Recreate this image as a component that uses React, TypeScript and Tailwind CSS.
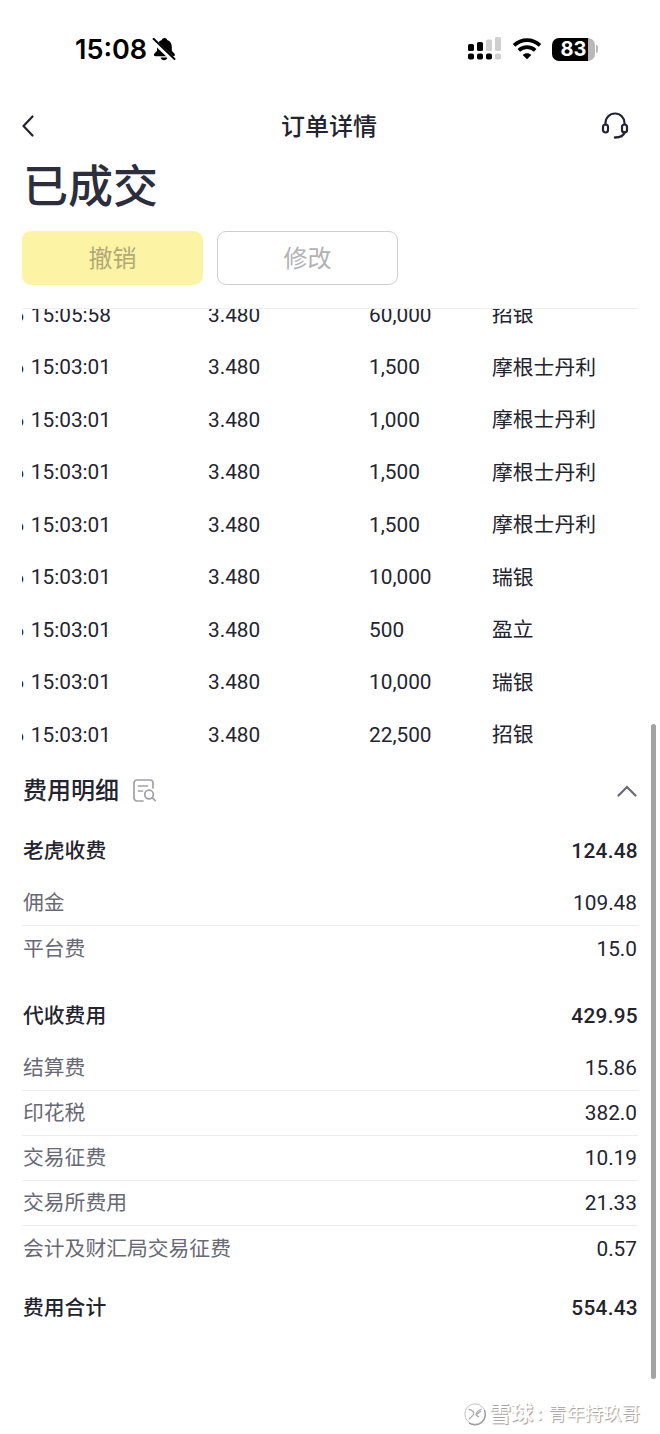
const trades = [
  { time: '06/26 15:05:58', price: '3.480', amount: '60,000', broker: '招银' },
  { time: '06/26 15:03:01', price: '3.480', amount: '1,500', broker: '摩根士丹利' },
  { time: '06/26 15:03:01', price: '3.480', amount: '1,000', broker: '摩根士丹利' },
  { time: '06/26 15:03:01', price: '3.480', amount: '1,500', broker: '摩根士丹利' },
  { time: '06/26 15:03:01', price: '3.480', amount: '1,500', broker: '摩根士丹利' },
  { time: '06/26 15:03:01', price: '3.480', amount: '10,000', broker: '瑞银' },
  { time: '06/26 15:03:01', price: '3.480', amount: '500', broker: '盈立' },
  { time: '06/26 15:03:01', price: '3.480', amount: '10,000', broker: '瑞银' },
  { time: '06/26 15:03:01', price: '3.480', amount: '22,500', broker: '招银' }
];

const feeGroups = [
  {
    name: '老虎收费',
    total: '124.48',
    items: [
      { name: '佣金', value: '109.48' },
      { name: '平台费', value: '15.0' }
    ]
  },
  {
    name: '代收费用',
    total: '429.95',
    items: [
      { name: '结算费', value: '15.86' },
      { name: '印花税', value: '382.0' },
      { name: '交易征费', value: '10.19' },
      { name: '交易所费用', value: '21.33' },
      { name: '会计及财汇局交易征费', value: '0.57' }
    ]
  }
];

function StatusBar() {
  return (
    <div className="flex h-24 items-center justify-between pt-[2px] pl-[75px] pr-[61px]">
      <div className="flex items-center gap-[5px] font-['Inter'] text-[27px] font-semibold text-black">
        <span className="w-[72px] whitespace-nowrap pt-[2px]">15:08</span>
        <svg width="24" height="24" viewBox="0 0 24 24">
          <path
            d="M12.500 1C11 1 10 1.900 9.800 3 6.800 4 5 6.500 5 10v3.500c0 1.200-3.200 2.800-3.200 4.300 0 .900.600 1.400 1.600 1.400h18c1 0 1.600-.500 1.600-1.400 0-1.500-3.200-3.100-3.200-4.300V10c0-3.500-1.600-6-4.600-7-.200-1.100-1.200-2-2.700-2z"
            fill="#000"
          />
          <path d="M8.600 20.500h6.800c-.500 1.800-1.800 2.700-3.400 2.700s-2.900-.900-3.400-2.700z" fill="#000" />
          <path d="M0 2.500L22 23.500" stroke="#fff" strokeWidth="4.800" />
          <path d="M1.500 1.800L22.500 22" stroke="#000" strokeWidth="1.900" strokeLinecap="round" />
        </svg>
      </div>
      <div className="flex items-center">
        <svg width="34" height="24" viewBox="0 0 34 24">
          <g fill="#000">
            <rect x="0" y="7" width="6" height="7" rx="1.600" />
            <rect x="9" y="5" width="6" height="9" rx="1.600" />
            <rect x="0" y="16.500" width="6" height="6" rx="1.800" />
            <rect x="9" y="16.500" width="6" height="6" rx="1.800" />
            <rect x="18" y="16.500" width="6" height="6" rx="1.800" />
          </g>
          <g fill="#cfcfcf">
            <rect x="18" y="2.500" width="6" height="11.500" rx="1.600" />
            <rect x="27" y="0" width="6" height="14" rx="1.600" />
            <rect x="27" y="16.500" width="6" height="6" rx="1.800" />
          </g>
        </svg>
        <svg className="ml-[10px]" width="30" height="22" viewBox="0 0 30 22">
          <g fill="none" stroke="#000" strokeWidth="3.600">
            <path d="M2 7.400C9.500 0.300 20.500 0.300 28 7.400" />
            <path d="M6.800 12.300C11.500 8 18.500 8 23.200 12.300" />
          </g>
          <path d="M15 21.300l-4.300-4.400c2.500-2.200 6.100-2.200 8.600 0z" fill="#000" />
        </svg>
        <div className="ml-[10px] flex h-[23px] w-[43px] items-center justify-center rounded-[7px] bg-[linear-gradient(to_right,#000_83%,#b8b8b8_83%)] font-['Inter'] text-[20px] font-bold text-white">
          83
        </div>
        <div className="mr-[1px] ml-[1px] h-2 w-[2px] rounded-r-full bg-[#b8b8b8]" />
      </div>
    </div>
  );
}

function Header() {
  return (
    <div className="flex h-[60px] items-center justify-between pr-[31px] pl-[22px]">
      <svg width="35" height="22" viewBox="0 0 35 22" fill="none">
        <path d="M10.500 1.500L1.500 11l9 9.500" stroke="#23242f" strokeWidth="2.200" strokeLinecap="round" strokeLinejoin="round" />
      </svg>
      <h1 className="pt-[2px] text-[24px] font-medium">订单详情</h1>
      <svg width="28" height="28" viewBox="0 0 28 28" fill="none" stroke="#23242f" strokeWidth="2.200" strokeLinecap="round">
        <path d="M4.500 12.500V11a9.500 9.500 0 0 1 19 0v1.500" />
        <rect x="2" y="12.500" width="5" height="8" rx="2.500" />
        <rect x="21" y="12.500" width="5" height="8" rx="2.500" />
        <path d="M23.500 20.500c-1 3.500-4 5-9.500 5" strokeWidth="2.500" />
      </svg>
    </div>
  );
}

function Watermark() {
  return (
    <div className="flex items-center whitespace-nowrap text-white [text-shadow:1px_1px_1px_#9a9a9a]">
      <svg width="24" height="24" viewBox="0 0 24 24" fill="none">
        <circle cx="12" cy="12" r="10.200" stroke="#c4c4c4" />
        <path d="M21.500 8A10.500 10.500 0 0 1 6 21" stroke="#999" strokeWidth="1.300" />
        <path d="M5.500 7.500c3 0 6 2.500 5 5-.800 2-3 2.500-4.500 5M18.500 7c-3 1.500-5.500 3.500-5.500 5.500 0 1.500 2 1.500 3 2.500M13.500 12.500l4.500-3.500" stroke="#aaa" strokeWidth="1.300" />
      </svg>
      <span className="ml-[2px] text-[22px] font-bold">雪球</span>
      <span className="w-[15px] pl-1 text-[18px] font-bold">:</span>
      <span className="text-[18.400px]">青年持玖哥</span>
    </div>
  );
}

function App() {
  return (
    <div className="relative flex h-[1434px] w-[660px] flex-col overflow-hidden bg-white font-['Roboto','Noto_Sans_CJK_SC',sans-serif] text-[20.8px] text-[#23242f]">
      <StatusBar />
      <Header />

      <div className="px-[22px]">
        <h2 className="h-[75px] pt-[3px] pl-[1px] text-[45px] leading-[58px] font-medium text-[#2c2e3d]">已成交</h2>
        <div className="flex gap-[14px]">
          <button className="h-[54px] w-[181px] rounded-[9px] bg-[#fdf3a5] pt-[2px] text-[24px] text-[#b1a978]">撤销</button>
          <button className="h-[54px] w-[181px] rounded-[9px] border border-[#cfcfd2] pt-[2px] text-[24px] text-[#b2b2b5]">修改</button>
        </div>

        <div className="mt-[23px] flex h-[453px] flex-col justify-end overflow-hidden border-t border-[#ededed]">
          {trades.map((trade, i) => (
            <div key={i} className="grid h-[52.5px] shrink-0 grid-cols-[186px_161px_123px_1fr] items-center pt-[1px]">
              <div className="flex w-[89px] justify-end overflow-hidden whitespace-nowrap [word-spacing:1.5px]">{trade.time}</div>
              <div>{trade.price}</div>
              <div>{trade.amount}</div>
              <div className="pt-[1px]">{trade.broker}</div>
            </div>
          ))}
        </div>

        <div className="flex h-[60px] items-center justify-between pr-[1px]">
          <div className="flex items-center gap-[14px]">
            <h3 className="pl-[1px] text-[24px] font-medium">费用明细</h3>
            <svg className="-ml-[1px]" width="25" height="24" viewBox="0 0 25 24" fill="none" stroke="#a0a1a8" strokeWidth="1.700" strokeLinecap="round">
              <path d="M11 22H5a3 3 0 0 1-3-3V4a3 3 0 0 1 3-3h13a3 3 0 0 1 3 3v5" />
              <path d="M6.500 7h9M6.500 12h4" />
              <circle cx="17" cy="15.500" r="4.300" />
              <path d="M20.200 18.700l3 3" />
            </svg>
          </div>
          <svg width="20" height="12" viewBox="0 0 20 12" fill="none">
            <path d="M1.500 10.500L10 2l8.500 8.500" stroke="#686975" strokeWidth="2.200" strokeLinecap="round" />
          </svg>
        </div>

        {feeGroups.map((group) => (
          <div key={group.name} className="mb-[15px]">
            <div className="flex h-[60px] items-center justify-between pt-[2px] pl-[1px] font-medium">
              <span>{group.name}</span>
              <span className="tracking-[0.3px]">{group.total}</span>
            </div>
            <div className="divide-y divide-[#ededed]">
              {group.items.map((item) => (
                <div key={item.name} className="flex h-[45px] items-center justify-between pt-[2px] pr-[1px] pl-[1px]">
                  <span className="text-[#686975]">{item.name}</span>
                  <span>{item.value}</span>
                </div>
              ))}
            </div>
          </div>
        ))}

        <div className="-mt-[7px] flex h-[60px] items-center justify-between pl-[1px] font-medium">
          <span>费用合计</span>
          <span className="tracking-[0.3px]">554.43</span>
        </div>
      </div>

      <div className="mt-auto flex justify-end pr-[20px] pb-[4px]">
        <Watermark />
      </div>

      {/* scroll indicator */}
      <div className="absolute top-[724px] right-[4px] h-[655px] w-[5px] rounded-full bg-[#a3a3a3]" />
    </div>
  );
}

export default App;
